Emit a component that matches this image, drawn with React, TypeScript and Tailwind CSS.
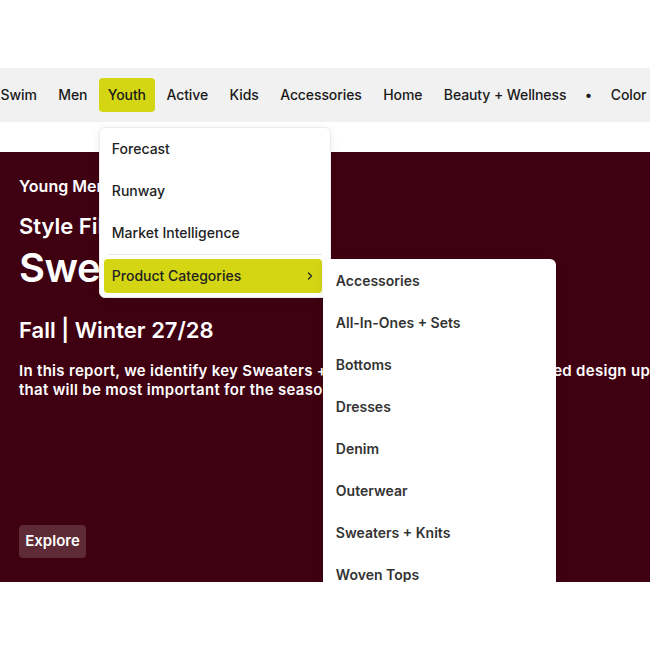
import { ChevronRight } from 'lucide-react'

const navItems = ['Swim', 'Men', 'Youth', 'Active', 'Kids', 'Accessories', 'Home', 'Beauty + Wellness', '•', 'Color']

const menuItems = ['Forecast', 'Runway', 'Market Intelligence']

const categories = [
  'Accessories',
  'All-In-Ones + Sets',
  'Bottoms',
  'Dresses',
  'Denim',
  'Outerwear',
  'Sweaters + Knits',
  'Woven Tops',
  'Jersey Tops',
]

function YouthMenu() {
  return (
    <div className="absolute left-0 top-[49px] w-[232px] rounded-md border border-[#ececec] bg-white pb-[4px] shadow-[0_2px_8px_rgba(0,0,0,0.08)] z-10 tracking-normal">
      {menuItems.map(item => (
        <div key={item} className="h-[42px] flex items-center px-[12px] text-[14px] font-medium text-[#222]">
          {item}
        </div>
      ))}
      <div className="mx-[8px] h-px bg-[#e6e6e6]" />
      <div className="relative mt-[4px] ml-[4px] mr-[8px] h-[34px] flex items-center justify-between rounded-[4px] bg-[#d4d614] pl-[8px] pr-[6px] text-[14px] font-medium text-[#222]">
        Product Categories
        <ChevronRight className="h-[12px] w-[12px]" strokeWidth={2.5} />
        <div className="absolute left-[219px] top-0 w-[233px] rounded-md bg-white shadow-[0_2px_8px_rgba(0,0,0,0.1)] pt-[1px]">
          {categories.map(c => (
            <div key={c} className="h-[42px] flex items-center px-[13px] text-[14px] font-semibold text-[#333]">
              {c}
            </div>
          ))}
        </div>
      </div>
    </div>
  )
}

export default function App() {
  return (
    <div className="w-[650px] h-[650px] overflow-hidden bg-white font-['Inter',sans-serif]">
      <div className="h-[582px] overflow-hidden">
        <div className="h-[68px]" />
        <nav className="h-[54px] bg-[#f1f1f1] flex items-center gap-[1.5px] ml-[-9.5px] pb-[1px] whitespace-nowrap">
          {navItems.map(item => (
            <div
              key={item}
              className={
                item === 'Youth'
                  ? 'relative h-[34px] flex items-center px-[9px] rounded-[4px] bg-[#d4d614] text-[14px] font-medium tracking-[-0.1px] text-[#1a1a1a]'
                  : item === '•'
                    ? 'h-[34px] flex items-center px-[7px] text-[14px] font-medium text-[#1a1a1a]'
                    : 'h-[34px] flex items-center px-[10px] text-[14px] font-medium tracking-[-0.1px] text-[#1a1a1a]'
              }
            >
              {item}
              {item === 'Youth' && <YouthMenu />}
            </div>
          ))}
        </nav>
        <div className="h-[30px]" />
        <section className="h-[430px] bg-[#3f0011] px-[19px] pt-[24px] text-white">
          <p className="text-[16px] font-semibold leading-[20px]">Young Men's</p>
          <h2 className="mt-[16px] text-[22px] font-semibold leading-[28px]">Style File</h2>
          <h1 className="mt-[4px] text-[40px] font-semibold leading-[48px] tracking-[-0.5px]">Sweaters + Knits</h1>
          <p className="mt-[24px] text-[22px] font-semibold leading-[28px]">Fall | Winter 27/28</p>
          <p className="mt-[17px] w-[780px] text-[15px] font-semibold leading-[19px] tracking-[0.3px]">
            <span className="block whitespace-nowrap">In this report, we identify key Sweaters + Knits items and their associated design updates</span>
            <span className="block whitespace-nowrap">that will be most important for the season.</span>
          </p>
          <button className="mt-[126px] h-[33px] w-[67px] rounded-[4px] bg-[#5e2a35] text-[15px] font-semibold text-white">
            Explore
          </button>
        </section>
      </div>
    </div>
  )
}
